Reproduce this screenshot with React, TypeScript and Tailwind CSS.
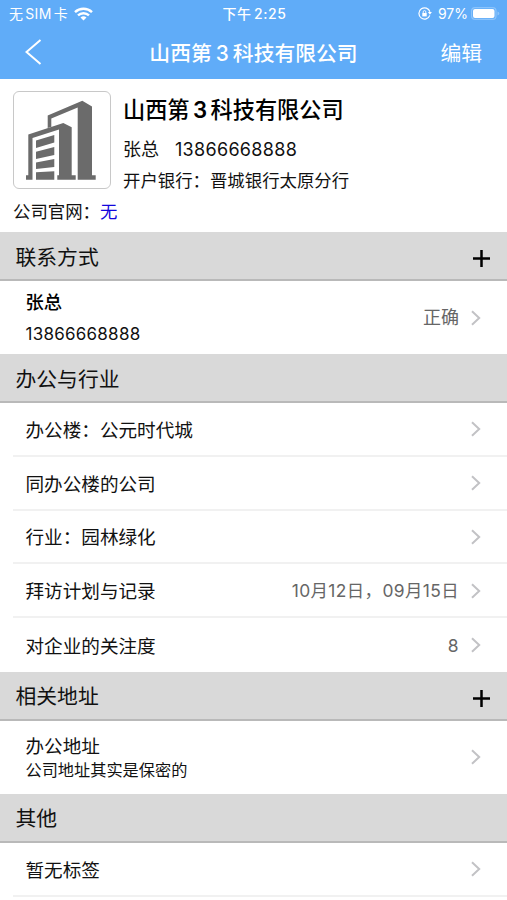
import type { ReactNode } from "react";

interface RowProps {
  label: string;
  value?: string;
  last?: boolean;
}

function Chevron() {
  return (
    <svg className="ml-[12px] h-[16px] w-[10px] shrink-0" viewBox="0 0 10 16" fill="none" stroke="#c2c2c5" strokeWidth={2}>
      <path d="M1 1.2 8.2 8 1 14.8" />
    </svg>
  );
}

function SectionHeader({ title, addable }: { title: string; addable?: boolean }) {
  return (
    <div className="flex h-[49px] shrink-0 items-center justify-between border-b-2 border-[#b9b9b9] bg-[#d9d9d9] pr-[17px] pl-[15.5px]">
      <h2 className="pt-[4px] text-[20.8px] leading-[30px]">{title}</h2>
      {addable && (
        <svg className="mt-[6px] h-[17px] w-[17px]" viewBox="0 0 17 17" stroke="#000" strokeWidth={2.5}>
          <path d="M8.5 0v17M0 8.5h17" />
        </svg>
      )}
    </div>
  );
}

function Row({ label, value, last }: RowProps) {
  return (
    <div className="ml-[13px] h-[53.8px] shrink-0">
      <div
        className={
          last
            ? "flex h-full items-center pr-[26px] pl-[12.5px]"
            : "flex h-full items-center border-b-2 border-[#f1f1f1] pt-[1px] pr-[26px] pl-[12.5px]"
        }
      >
        <span className="flex-1 pt-[1px] text-[18.6px] leading-[26px]">{label}</span>
        {value && <span className="pt-[1px] text-[17.4px] leading-[26px] tracking-[0.4px] text-[#666]">{value}</span>}
        <Chevron />
      </div>
    </div>
  );
}

function DetailRow({ children, value }: { children: ReactNode; value?: string }) {
  return (
    <div className="flex h-[73px] shrink-0 items-center pr-[26px] pl-[25.5px]">
      <div className="flex-1">{children}</div>
      {value && <span className="pt-[1px] text-[18px] leading-[26px] text-[#666]">{value}</span>}
      <Chevron />
    </div>
  );
}

function StatusBar() {
  return (
    <div className="grid h-[27px] grid-cols-3 items-center pr-[7px] pl-[9px] text-[14px]">
      <div className="flex items-center">
        <span className="tracking-[0.4px] [word-spacing:-2.5px]">无 SIM 卡</span>
        <svg className="ml-[6px] h-[14px] w-[19px]" viewBox="0 0 19 14" fill="none" stroke="#fff" strokeWidth={2.4}>
          <path d="M1 5.2a12.3 12.3 0 0 1 17 0M4 8.4a8 8 0 0 1 11 0" />
          <path d="M9.5 13.4 6.5 10.6a4.4 4.4 0 0 1 6 0Z" fill="#fff" stroke="none" />
        </svg>
      </div>
      <span className="text-center font-medium tracking-[0.6px] [word-spacing:-2px]">下午 2:25</span>
      <div className="flex items-center justify-end">
        <svg className="mr-[6px] h-[13px] w-[14px]" viewBox="0 0 14 13" fill="none" stroke="#fff" strokeWidth={1.2}>
          <path d="M11.8 8.4A5.6 5.6 0 1 1 11.9 4.8" />
          <path d="M9.9 5h4l-2 2.7Z" fill="#fff" stroke="none" />
          <path d="M4.3 6h4.4v3.4H4.3z" fill="#fff" stroke="none" />
          <path d="M5.2 6V4.9a1.3 1.3 0 0 1 2.6 0V6" strokeWidth={0.9} />
        </svg>
        <span>97%</span>
        <svg className="ml-[3px] h-[13px] w-[29px]" viewBox="0 0 29 13" fill="none">
          <rect x="0.6" y="0.6" width="24.4" height="11.8" rx="3.5" stroke="#8cc4fb" strokeWidth={1.2} />
          <rect x="2" y="2" width="21.5" height="9" rx="2" fill="#fff" />
          <path d="M26.5 4.500v4q1.800-.7 1.800-2t-1.800-2Z" fill="#8cc4fb" />
        </svg>
      </div>
    </div>
  );
}

function BuildingLogo() {
  return (
    <div className="h-[98px] w-[98px] shrink-0 rounded-[6px] border border-[#c8c8c8]">
      <svg className="h-full w-full" viewBox="14 92 96 96" fill="#6b6b6b">
        <path d="M47.700 128V115.500L82.300 100.700 92 106.500V175.300H95.700V179.700H77.700V107.500L51.300 118.500V127Z" />
        <path d="M26 175.300H28.300V134.500L63.300 123 71.700 127.300V175.300H75.700V179.700H57.300V175.300H59V129.500L32.500 138V175.300V179.700H26Z" />
        <path d="M36 140.500 54.300 135v7.500L36 148ZM36 151.700 54.300 147v8L36 159ZM36 162.500 54.300 159v8L36 169ZM36 172.300l18.300-1v8.400H36Z" />
      </svg>
    </div>
  );
}

export default function App() {
  return (
    <div className="flex h-[900px] w-[507px] flex-col overflow-hidden bg-white font-['Inter','Noto_Sans_CJK_SC',sans-serif] text-[#111]">
      <header className="h-[79px] shrink-0 bg-[#60acf8] text-white">
        <StatusBar />
        <div className="grid h-[50px] grid-cols-[100px_1fr_100px] items-center pr-[25px] pl-[25px]">
          <svg className="h-[26px] w-[17px]" viewBox="0 0 17 26" fill="none" stroke="#fff" strokeWidth={2}>
            <path d="M15.500 1 1.500 13l14 12" />
          </svg>
          <h1 className="pt-[3px] text-center text-[20.8px] font-medium whitespace-nowrap [word-spacing:-1.5px]">
            山西第 3 科技有限公司
          </h1>
          <span className="pt-[3px] text-right text-[20.8px]">编辑</span>
        </div>
      </header>

      <section className="h-[153px] shrink-0 pt-[12px] pl-[13px]">
        <div className="flex">
          <BuildingLogo />
          <div className="ml-[12px]">
            <p className="mt-[2px] text-[22.2px] leading-[34px] font-medium text-black [word-spacing:-2.5px]">
              山西第 <b className="font-semibold">3</b> 科技有限公司
            </p>
            <p className="mt-[9px] flex leading-[28px]">
              <span className="w-[52px] text-[18px]">张总</span>
              <span className="text-[18px] tracking-[0.3px]">13866668888</span>
            </p>
            <p className="mt-[4px] text-[17.4px] leading-[26px]">开户银行：晋城银行太原分行</p>
          </div>
        </div>
        <p className="mt-[5px] text-[17.4px] leading-[26px]">
          公司官网：<a className="text-[#1205dc]">无</a>
        </p>
      </section>

      <SectionHeader title="联系方式" addable />
      <DetailRow value="正确">
        <p className="pt-[1px] text-[18.3px] leading-[31px] font-medium text-black">张总</p>
        <p className="text-[17px] leading-[32px] tracking-[0.25px]">13866668888</p>
      </DetailRow>

      <SectionHeader title="办公与行业" />
      <Row label="办公楼：公元时代城" />
      <Row label="同办公楼的公司" />
      <Row label="行业：园林绿化" />
      <Row label="拜访计划与记录" value="10月12日，09月15日" />
      <Row label="对企业的关注度" value="8" last />

      <SectionHeader title="相关地址" addable />
      <DetailRow>
        <p className="pt-[1px] text-[18.6px] leading-[24px]">办公地址</p>
        <p className="text-[16.2px] leading-[24px]">公司地址其实是保密的</p>
      </DetailRow>

      <SectionHeader title="其他" />
      <Row label="暂无标签" />
    </div>
  );
}
